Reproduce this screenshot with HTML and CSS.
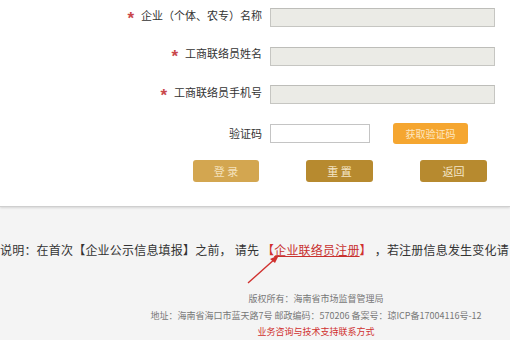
FILE: index.html
```html
<!DOCTYPE html>
<html lang="zh-CN">
<head>
<meta charset="utf-8">
<title>企业联络员登录</title>
<link rel="stylesheet" href="styles.css">
</head>
<body>
<div class="top">
  <form class="form">
    <div class="row">
      <label class="label"><span class="star">*</span>企业（个体、农专）名称</label>
      <input class="field" type="text" disabled>
    </div>
    <div class="row">
      <label class="label"><span class="star">*</span>工商联络员姓名</label>
      <input class="field" type="text" disabled>
    </div>
    <div class="row">
      <label class="label"><span class="star">*</span>工商联络员手机号</label>
      <input class="field" type="text" disabled>
    </div>
    <div class="row">
      <label class="label">验证码</label>
      <div class="code-wrap">
        <input class="code" type="text">
        <button type="button" class="btn-code">获取验证码</button>
      </div>
    </div>
    <div class="actions">
      <button type="button" class="btn btn-login">登 录</button>
      <button type="button" class="btn btn-dark">重 置</button>
      <button type="button" class="btn btn-dark">返回</button>
    </div>
  </form>
</div>
<div class="bottom">
  <p class="notice">说明：在首次【企业公示信息填报】之前， 请先 <span class="red">【<a class="link" href="#">企业联络员注册</a>】</span> ，若注册信息发生变化请</p>
  <svg class="arrow" width="40" height="34" viewBox="0 0 40 34">
    <line x1="5" y1="31" x2="33" y2="6" stroke="#d0302e" stroke-width="1.4"/>
    <polygon points="36,3 27,7 32,11" fill="#d0302e"/>
  </svg>
  <footer class="footer">
    <div>版权所有：海南省市场监督管理局</div>
    <div>地址：海南省海口市蓝天路7号 邮政编码：570206 备案号：琼ICP备17004116号-12</div>
    <div><a class="foot-link" href="#">业务咨询与技术支持联系方式</a></div>
  </footer>
</div>
</body>
</html>
```
FILE: styles.css
```css
html, body {
  margin: 0;
  padding: 0;
}
body {
  width: 510px;
  height: 340px;
  overflow: hidden;
  font-family: "Noto Sans CJK SC", "Microsoft YaHei", sans-serif;
  color: #333;
  background: #f4f4f4;
}
.top {
  background: #fff;
  height: 206px;
  border-bottom: 1px solid #cfcfcf;
  box-shadow: 0 1px 2px rgba(0,0,0,0.12);
}
.form {
  margin: 0;
  padding: 0;
}
.row {
  display: grid;
  grid-template-columns: 262px auto;
  column-gap: 8px;
  align-items: center;
  height: 35px;
  margin-bottom: 3.5px;
}
.label {
  text-align: right;
  font-size: 11px;
  color: #333;
  white-space: nowrap;
}
.star {
  color: #c9474a;
  font-size: 17px;
  font-weight: bold;
  font-family: "Liberation Sans", sans-serif;
  vertical-align: -4px;
  margin-right: 7px;
}
.field {
  box-sizing: border-box;
  width: 225px;
  height: 19px;
  margin: 0;
  border: 1px solid #c6c6c2;
  border-top-color: #bdbdb9;
  background: #ebebe6;
  padding: 0;
}
.code-wrap {
  display: flex;
  align-items: center;
  gap: 23px;
}
.code {
  box-sizing: border-box;
  width: 100px;
  height: 19px;
  margin: 0;
  padding: 0;
  border: 1px solid #c4c4c4;
  background: #fff;
}
.btn-code {
  width: 75px;
  height: 21px;
  border: 0;
  border-radius: 3px;
  background: #f5a630;
  color: #fde6c0;
  font-size: 10px;
  font-family: inherit;
  padding: 0;
}
.actions {
  display: flex;
  gap: 47px;
  padding-left: 193px;
  margin-top: 9px;
}
.btn {
  width: 66px;
  height: 22px;
  border: 0;
  border-radius: 3px;
  padding: 0;
  font-size: 11px;
  font-family: inherit;
}
.btn-login {
  background: #d3a650;
  color: #f3e1bb;
}
.btn-dark {
  width: 67px;
  background: #b78a2f;
  color: #f4e6c8;
}
.bottom {
  position: relative;
  padding-top: 34px;
}
.notice {
  margin: 0;
  font-size: 12px;
  letter-spacing: 0.2px;
  line-height: 18px;
  color: #333;
  white-space: nowrap;
}
.red {
  color: #d0302e;
}
.link {
  color: #c8312f;
  text-decoration: underline;
}
.arrow {
  position: absolute;
  left: 243px;
  top: 45px;
}
.footer {
  margin-top: 32px;
  padding-left: 122px;
  text-align: center;
  font-size: 9px;
  line-height: 16.5px;
  color: #777;
}
.foot-link {
  color: #d0302e;
  text-decoration: none;
}
```
